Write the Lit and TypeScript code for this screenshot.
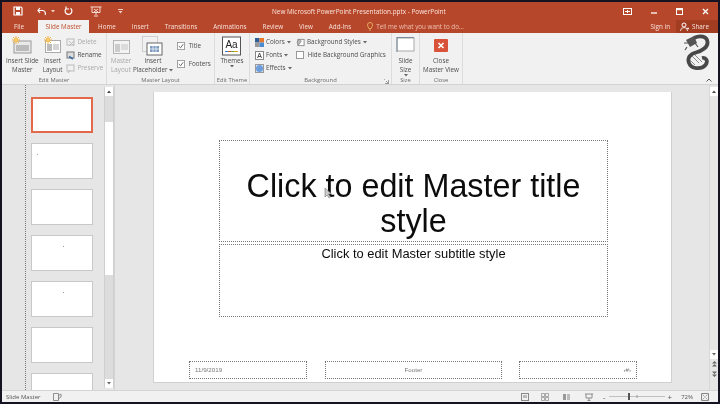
import { LitElement, html, css, svg } from "lit";
import { customElement } from "lit/decorators.js";

const sun = svg`<g stroke="#f0b040" stroke-width="1"><path d="M4 0v8M0 4h8M1 1l6 6M7 1l-6 6"/></g><circle cx="4" cy="4" r="2" fill="#f6c860"/>`;

@customElement("app-root")
export class AppRoot extends LitElement {
  static styles = css`
    :host { display: block; width: 720px; height: 404px; background: #15131f; overflow: hidden; font-family: "Open Sans", "Noto Sans", sans-serif; }
    .win { margin: 2px 2px 2px 2px; height: 400px; display: flex; flex-direction: column; background: #e6e6e6; filter: blur(0.4px); }
    .title { height: 18px; background: #b7472a; color: #fff; display: flex; align-items: center; flex: none; }
    .qat { display: flex; align-items: center; width: 270px; flex: none; }
    .qat svg { display: block; }
    .qat .a { margin-left: 11px; }
    .qat .b { margin-left: 14px; }
    .qat .c { margin-left: 4px; }
    .qat .d { margin-left: 9px; }
    .qat .e { margin-left: 17px; }
    .qat .g { margin-left: 16px; }
    .doc { font-size: 6.4px; color: #fbe6df; white-space: nowrap; }
    .caps { margin-left: auto; display: flex; align-items: center; gap: 19px; padding-right: 9px; }
    .tabs { height: 13px; background: #b7472a; color: #f6e2dc; display: flex; align-items: stretch; font-size: 6.3px; flex: none; }
    .tab { display: flex; align-items: center; white-space: nowrap; }
    .tab.file { width: 36px; padding-left: 12px; box-sizing: border-box; }
    .tab.on { background: #f1f1f1; color: #c0502f; width: 51px; justify-content: center; margin-right: 9px; }
    .tab.n { margin-right: 16px; }
    .tell { display: flex; align-items: center; gap: 3px; color: #eec1b4; }
    .acct { margin-left: auto; display: flex; align-items: stretch; }
    .sign { display: flex; align-items: center; margin-right: 6px; }
    .share { display: flex; align-items: center; gap: 3px; background: #a23d22; width: 42px; box-sizing: border-box; padding-left: 4px; }
    .ribbon { height: 52px; background: #f1f1f1; display: flex; flex: none; font-size: 6.3px; color: #4c4c4c; border-bottom: 1px solid #d2d2d2; box-sizing: border-box; position: relative; }
    .grp { display: flex; flex-direction: column; border-right: 1px solid #dcdcdc; box-sizing: border-box; flex: none; }
    .grp .body { flex: 1; display: flex; align-items: flex-start; padding-top: 3px; min-height: 0; }
    .grp .lbl { height: 8px; text-align: center; font-size: 5.8px; color: #6a6a6a; line-height: 8px; position: relative; }
    .g1 { width: 105px; }
    .g1 .body { padding-left: 4px; gap: 4px; }
    .g2 { width: 108px; }
    .g2 .body { padding-left: 2px; }
    .g3 { width: 35px; }
    .g4 { width: 142px; }
    .g4 .body { padding-left: 5px; }
    .g5 { width: 28px; }
    .g6 { width: 43px; }
    .center { justify-content: center; }
    .big { display: flex; flex-direction: column; align-items: center; text-align: center; line-height: 9px; flex: none; white-space: nowrap; }
    .big svg.ic { display: block; height: 20px; }
    .big.dim { color: #a8a8a8; }
    .w24 { width: 24px; }
    .w40 { width: 40px; }
    .col { display: flex; flex-direction: column; gap: 3px; line-height: 10px; flex: none; margin-top: 1px; }
    .col.w41 { width: 41px; }
    .col.checks { gap: 8px; margin: 5px 0 0 4px; }
    .item { display: flex; align-items: center; gap: 2px; height: 10px; white-space: nowrap; }
    .item.dim { color: #aaa; }
    .dragon { position: absolute; right: 8px; top: 1px; }
    .collapse { position: absolute; right: 6px; top: 45px; }
    .launch { position: absolute; right: 2px; top: 3px; }
    .main { flex: 1; display: flex; min-height: 0; background: #e6e6e6; }
    .panel { width: 113px; flex: none; display: flex; border-right: 1px solid #d4d4d4; box-sizing: border-box; overflow: hidden; }
    .ruler { width: 24px; flex: none; border-right: 1px dotted #777; box-sizing: border-box; }
    .thumbs { width: 78px; flex: none; display: flex; flex-direction: column; gap: 10px; padding: 12px 0 0 5px; box-sizing: border-box; overflow: hidden; }
    .th { width: 62px; height: 36px; flex: none; background: #fff; border: 1px solid #c8c8c8; box-sizing: border-box; position: relative; }
    .th.sel { border: 2px solid #e2694a; }
    .th.dot::after { content: ""; position: absolute; left: 31px; top: 10px; width: 1px; height: 1px; background: #999; }
    .th.dotl::after { content: ""; position: absolute; left: 5px; top: 10px; width: 1px; height: 1px; background: #aaa; }
    .sb { width: 10px; flex: none; background: #dcdcdc; display: flex; flex-direction: column; margin: 2px 0; border: 1px solid #cfcfcf; border-width: 0 1px; box-sizing: border-box; }
    .arr { height: 9px; background: #fff; display: flex; align-items: center; justify-content: center; flex: none; }
    .sb .on { background: #fff; height: 153px; margin-top: 26px; flex: none; }
    .sp { flex: 1; }
    .stage { flex: 1; min-width: 0; display: flex; padding: 7px 0 7px 38px; }
    .slide { width: 519px; height: 291px; background: #fff; border: 1px solid #d0d0d0; border-width: 0 1px 1px 1px; box-sizing: border-box; position: relative; color: #0c0c0c; font-family: "Liberation Sans", Arial, sans-serif; }
    .ph { position: absolute; border: 1px dotted #777; box-sizing: border-box; text-align: center; }
    .t { left: 65px; top: 48px; width: 389px; height: 102px; font-size: 32.3px; line-height: 35px; padding-top: 28px; }
    .s { left: 65px; top: 152px; width: 389px; height: 73px; font-size: 12.9px; line-height: 17px; }
    .f { top: 269px; height: 18px; font-size: 6.2px; color: #777; line-height: 16px; }
    .f1 { left: 35px; width: 118px; text-align: left; padding-left: 5px; }
    .f2 { left: 171px; width: 177px; }
    .f3 { left: 365px; width: 118px; text-align: right; padding-right: 5px; }
    .cursor { position: absolute; left: 170px; top: 95px; }
    .vs { width: 9px; flex: none; background: #e6e6e6; border-left: 1px solid #d8d8d8; display: flex; flex-direction: column; box-sizing: border-box; padding: 2px 0 11px; }
    .mini { height: 10px; display: flex; align-items: center; justify-content: center; flex: none; }
    .status { height: 12px; background: #f1f1f1; border-top: 1px solid #d4d4d4; display: flex; align-items: center; font-size: 6px; color: #555; flex: none; box-sizing: border-box; }
    .status .name { margin-left: 4px; width: 47px; }
    .right { margin-left: auto; display: flex; align-items: center; padding-right: 9px; }
    .m12 { margin-left: 12px; }
    .m14 { margin-left: 14px; }
    .m15 { margin-left: 15px; }
    .m10 { margin-left: 10px; }
    .m9 { margin-left: 9px; }
    .m8 { margin-left: 8px; }
    .zoom { display: flex; align-items: center; gap: 3px; font-size: 8px; line-height: 8px; }
  `;

  private dn() { return svg`<path d="M0 0h4L2 2.5z" fill="#666"/>`; }

  render() {
    const tri = html`<svg width="4" height="3"><path d="M0 0h4L2 2.5z" fill="#666"/></svg>`;
    const up = html`<svg width="4" height="3"><path d="M0 3h4L2 .5z" fill="#444"/></svg>`;
    const check = html`<svg width="8" height="8" viewBox="0 0 9 9"><rect x=".5" y=".5" width="8" height="8" fill="#fff" stroke="#999"/><path d="M2 4.500l2 2 3-4" fill="none" stroke="#555"/></svg>`;
    return html`<div class="win">
      <div class="title">
        <div class="qat">
          <svg class="a" width="10" height="10" viewBox="0 0 10 10"><path d="M1 1h7l1 1v7H1z" fill="none" stroke="#fff" stroke-width="1.2"/><path d="M3 1h4v3H3zM3 6h4v3H3z" fill="#fff"/></svg>
          <svg class="b" width="10" height="9" viewBox="0 0 10 9"><path d="M3 1L1 3.500 3 6M1.500 3.500H6a3 3 0 0 1 2 4.500" fill="none" stroke="#fff" stroke-width="1.2"/></svg>
          <svg class="c" width="4" height="3">${svg`<path d="M0 0h4L2 2.5z" fill="#f2d0c6"/>`}</svg>
          <svg class="d" width="9" height="10" viewBox="0 0 9 10"><path d="M6.500 2.200A3.400 3.400 0 1 1 2.500 2.200M2 .5v2.500h3" fill="none" stroke="#fff" stroke-width="1.2"/></svg>
          <svg class="e" width="12" height="11" viewBox="0 0 12 11"><path d="M.5 1h11M2 1v5.500h8V1M6 6.500V9M4 10h4" fill="none" stroke="#f6dcd4"/><path d="M4 3l4 3M8 3L4 6" stroke="#f6dcd4" fill="none"/></svg>
          <svg class="g" width="5" height="5" viewBox="0 0 5 5"><path d="M0 .5h5" stroke="#f2d0c6"/><path d="M.5 2h4L2.500 4.500z" fill="#f2d0c6"/></svg>
        </div>
        <div class="doc">New Microsoft PowerPoint Presentation.pptx - PowerPoint</div>
        <div class="caps">
          <svg width="9" height="7" viewBox="0 0 9 7"><rect x=".5" y=".5" width="8" height="6" fill="none" stroke="#fff"/><path d="M2 3.500h5M4.500 2v3" stroke="#fff"/></svg>
          <svg width="6" height="7" viewBox="0 0 6 7"><path d="M0 5h6" stroke="#fff" stroke-width="1.3"/></svg>
          <svg width="7" height="7" viewBox="0 0 7 7"><rect x=".5" y=".5" width="6" height="6" fill="none" stroke="#fff"/><path d="M0 1.500h7" stroke="#fff" stroke-width="1.400"/></svg>
          <svg width="7" height="7" viewBox="0 0 7 7"><path d="M1 1l5 5M6 1L1 6" stroke="#fff" stroke-width="1.300"/></svg>
        </div>
      </div>
      <div class="tabs">
        <div class="tab file">File</div>
        <div class="tab on">Slide Master</div>
        ${["Home","Insert","Transitions","Animations","Review","View","Add-Ins"].map(t => html`<div class="tab n">${t}</div>`)}
        <div class="tab tell">
          <svg width="6" height="9" viewBox="0 0 6 9"><path d="M1.800 6.500C1.500 5 .5 4.500.5 3a2.500 2.500 0 0 1 5 0c0 1.500-1 2-1.300 3.500zM2 8h2" fill="none" stroke="#eebf6f" stroke-width=".8"/></svg>
          Tell me what you want to do...
        </div>
        <div class="acct">
          <div class="tab sign">Sign in</div>
          <div class="share">
            <svg width="9" height="9" viewBox="0 0 9 9"><circle cx="4" cy="3" r="2" fill="none" stroke="#fff"/><path d="M.5 9a3.500 3.500 0 0 1 7 0M7 6.500h2M8 5.500v2" fill="none" stroke="#fff" stroke-width=".8"/></svg>
            Share
          </div>
        </div>
      </div>
      <div class="ribbon">
        <div class="grp g1">
          <div class="body">
            <div class="big"><svg class="ic" width="20" height="20" viewBox="0 0 20 20"><rect x="2" y="5" width="17" height="12" fill="#e9e9e9" stroke="#999"/><rect x="4" y="9" width="13" height="6" fill="#bbb"/>${sun}</svg>Insert Slide<br>Master</div>
            <div class="big"><svg class="ic" width="18" height="20" viewBox="0 0 18 20"><rect x="1.500" y="4.500" width="15" height="12" fill="#fff" stroke="#aaa"/><rect x="3" y="8" width="5" height="7" fill="#bbb"/><path d="M9 9h6M9 11h6M9 13h6" stroke="#aaa"/>${sun}</svg>Insert<br>Layout</div>
            <div class="col">
              <div class="item dim"><svg width="9" height="9" viewBox="0 0 9 9"><rect x="1" y="1" width="7" height="6" fill="none" stroke="#bbb"/><path d="M3 3l5 5M8 3L3 8" stroke="#bbb"/></svg>Delete</div>
              <div class="item"><svg width="9" height="9" viewBox="0 0 9 9"><rect x="1" y="1" width="7" height="6" fill="#ddd" stroke="#777"/><path d="M3 5.500l4 2.500" stroke="#3a6ea5" stroke-width="1.500"/></svg>Rename</div>
              <div class="item dim"><svg width="9" height="9" viewBox="0 0 9 9"><rect x="1" y="1" width="7" height="6" fill="none" stroke="#bbb"/><path d="M2 9l2-3" stroke="#bbb"/></svg>Preserve</div>
            </div>
          </div>
          <div class="lbl">Edit Master</div>
        </div>
        <div class="grp g2">
          <div class="body">
            <div class="big dim w24"><svg class="ic" width="17" height="20" viewBox="0 0 17 20"><rect x=".5" y="4.500" width="16" height="13" fill="#f3f3f3" stroke="#b5b5b5"/><rect x="2" y="8" width="5" height="8" fill="#ccc"/><path d="M8 9h7M8 11h7M8 13h7" stroke="#c4c4c4"/></svg>Master<br>Layout</div>
            <div class="big w40"><svg class="ic" width="22" height="20" viewBox="0 0 22 20"><rect x=".5" y=".5" width="15" height="15" fill="none" stroke="#aaa" stroke-dasharray="1 1"/><rect x="5" y="7" width="15" height="12" fill="#fff" stroke="#666"/><path d="M8 10h9v6H8z" fill="#7c9cc0"/><path d="M11 10v6M14 10v6M8 13h9" stroke="#fff" stroke-width=".7"/></svg>Insert<br><span>Placeholder ${tri}</span></div>
            <div class="col checks">
              <div class="item">${check}&nbsp;Title</div>
              <div class="item">${check}&nbsp;Footers</div>
            </div>
          </div>
          <div class="lbl">Master Layout</div>
        </div>
        <div class="grp g3">
          <div class="body center">
            <div class="big"><svg class="ic" width="19" height="20" viewBox="0 0 19 20"><rect x=".5" y="1" width="18" height="18" fill="#fff" stroke="#555"/><path d="M3 15.500h3" stroke="#4472c4"/><path d="M6 15.500h3" stroke="#c55a11"/><path d="M9 15.500h3" stroke="#70a030"/><path d="M12 15.500h4" stroke="#d0a020"/><text x="9.500" y="12" font-size="10" text-anchor="middle" fill="#222" font-family="Liberation Sans">Aa</text></svg>Themes<br>${tri}</div>
          </div>
          <div class="lbl">Edit Theme</div>
        </div>
        <div class="grp g4">
          <div class="body">
            <div class="col w41">
              <div class="item"><svg width="9" height="9" viewBox="0 0 9 9"><rect width="4.500" height="4.500" fill="#2f5f97"/><rect x="4.500" width="4.500" height="4.500" fill="#e8772e"/><rect y="4.500" width="4.500" height="4.500" fill="#999"/><rect x="4.500" y="4.500" width="4.500" height="4.500" fill="#4a8ccf"/></svg>Colors ${tri}</div>
              <div class="item"><svg width="9" height="9" viewBox="0 0 9 9"><rect x=".5" y=".5" width="8" height="8" fill="#fff" stroke="#888"/><path d="M2.500 7L4.500 2l2 5M3 5.500h3" fill="none" stroke="#333" stroke-width=".8"/></svg>Fonts ${tri}</div>
              <div class="item"><svg width="9" height="9" viewBox="0 0 9 9"><rect x=".5" y=".5" width="8" height="8" fill="#dbe6f4" stroke="#999"/><circle cx="4.500" cy="4.500" r="3.500" fill="#6d9edb"/></svg>Effects ${tri}</div>
            </div>
            <div class="col">
              <div class="item"><svg width="9" height="9" viewBox="0 0 10 9"><rect x="2" y="1" width="7" height="7" fill="#fff" stroke="#888"/><path d="M1 4l3-3 2 2-3 4z" fill="#bbb" stroke="#666" stroke-width=".6"/></svg>Background Styles ${tri}</div>
              <div class="item"><svg width="8" height="8"><rect x=".5" y=".5" width="7" height="7" fill="#fff" stroke="#999"/></svg>&nbsp;Hide Background Graphics</div>
            </div>
          </div>
          <div class="lbl">Background<svg class="launch" width="5" height="5" viewBox="0 0 5 5"><path d="M.5 0v.5H0M4.500 1v3.500H1M2 2l2.500 2.500" fill="none" stroke="#777" stroke-width=".7"/></svg></div>
        </div>
        <div class="grp g5">
          <div class="body center">
            <div class="big"><svg class="ic" width="19" height="20" viewBox="0 0 19 20"><rect x="1" y="2" width="17" height="13" fill="#fff" stroke="#a8a8a8"/><path d="M1 1v15" stroke="#7a8a9a"/><path d="M1 1.500h17" stroke="#7a8a9a"/></svg>Slide<br>Size ${tri}</div>
          </div>
          <div class="lbl">Size</div>
        </div>
        <div class="grp g6">
          <div class="body center">
            <div class="big"><svg class="ic" width="14" height="20" viewBox="0 0 14 20"><rect x="0" y="3" width="14" height="13" rx="1" fill="#d9533a"/><path d="M4.500 7l5 5M9.500 7l-5 5" stroke="#fff" stroke-width="1.600"/></svg>Close<br>Master View</div>
          </div>
          <div class="lbl">Close</div>
        </div>
        <svg class="dragon" width="26" height="38" viewBox="0 0 26 38">
          <path d="M10 4C16 1 23 2 23.500 8C24 13 18 17 12 18.500C6 20 3 24 5 29C7 35 17 36 21.500 31C24.500 27 22 23 18 24" fill="none" stroke="#484848" stroke-width="3.800"/>
          <path d="M2 6L10 2L13 9L6 13z" fill="#555"/>
          <path d="M0 9h8M3 13l-2 3M11 9l3 4" stroke="#555" stroke-width="1.200"/>
          <path d="M8 22l7 7M11 21l7 7M6 26l5 5" stroke="#8a8a8a" stroke-width="1"/>
        </svg>
        <svg class="collapse" width="6" height="4" viewBox="0 0 6 4"><path d="M.5 3.500L3 1l2.500 2.500" fill="none" stroke="#555"/></svg>
      </div>
      <div class="main">
        <div class="panel">
          <div class="ruler"></div>
          <div class="thumbs">
            <div class="th sel"></div>
            <div class="th dotl"></div>
            <div class="th"></div>
            <div class="th dot"></div>
            <div class="th dot"></div>
            <div class="th"></div>
            <div class="th"></div>
          </div>
          <div class="sb">
            <div class="arr">${up}</div>
            <div class="on"></div>
            <div class="sp"></div>
            <div class="arr"><svg width="4" height="3">${this.dn()}</svg></div>
          </div>
        </div>
        <div class="stage">
          <div class="slide">
            <div class="ph t">Click to edit Master title style</div>
            <div class="ph s">Click to edit Master subtitle style</div>
            <div class="ph f f1">11/9/2019</div>
            <div class="ph f f2">Footer</div>
            <div class="ph f f3">‹#›</div>
            <svg class="cursor" width="8" height="12" viewBox="0 0 8 12"><path d="M1 1v9l2-2 2 3 1.500-1-2-3h3z" fill="#ccc" stroke="#777" stroke-width=".6"/></svg>
          </div>
        </div>
        <div class="vs">
          <div class="arr">${up}</div>
          <div class="sp"></div>
          <div class="arr"><svg width="4" height="3">${this.dn()}</svg></div>
          <div class="mini"><svg width="5" height="6" viewBox="0 0 5 6"><path d="M0 2.500L2.500 0 5 2.500zM0 5.500L2.500 3 5 5.500z" fill="#666"/></svg></div>
          <div class="mini"><svg width="5" height="6" viewBox="0 0 5 6"><path d="M0 .5L2.500 3 5 .5zM0 3.500L2.500 6 5 3.500z" fill="#666"/></svg></div>
        </div>
      </div>
      <div class="status">
        <div class="name">Slide Master</div>
        <svg width="9" height="8" viewBox="0 0 9 8"><path d="M.5.5h5v7h-5zM5 3l3-2v3L5 6" fill="none" stroke="#777" stroke-width=".8"/></svg>
        <div class="right">
          <svg width="8" height="8"><rect x=".5" y=".5" width="7" height="7" fill="none" stroke="#888"/><rect x="2" y="2" width="4" height="3" fill="#bbb"/></svg>
          <svg class="m12" width="8" height="8"><path d="M.5.5h3v3h-3zM4.500.5h3v3h-3zM.5 4.500h3v3h-3zM4.500 4.500h3v3h-3z" fill="none" stroke="#888" stroke-width=".7"/></svg>
          <svg class="m14" width="7" height="8"><rect x="0" y="1" width="3" height="6" fill="#999"/><rect x="4" y="1" width="3" height="6" fill="#bbb"/></svg>
          <svg class="m15" width="8" height="8"><path d="M0 1h8M1 1v4h6V1M4 5v2M2.500 7.500h3" fill="none" stroke="#777" stroke-width=".8"/></svg>
          <div class="zoom m10">
            <span>-</span>
            <svg width="56" height="7"><path d="M0 3.500h56" stroke="#aaa" stroke-width=".7"/><rect x="19" y="0" width="2" height="7" fill="#555"/><path d="M28 2v3" stroke="#999"/></svg>
            <span>+</span>
          </div>
          <span class="m9">72%</span>
          <svg class="m8" width="8" height="8"><path d="M.5.5h7v7h-7z" fill="none" stroke="#888"/><path d="M1.500 1.500l2 2M6.500 1.500l-2 2M1.500 6.500l2-2M6.500 6.500l-2-2" stroke="#888" stroke-width=".7"/></svg>
        </div>
      </div>
    </div>`;
  }
}
